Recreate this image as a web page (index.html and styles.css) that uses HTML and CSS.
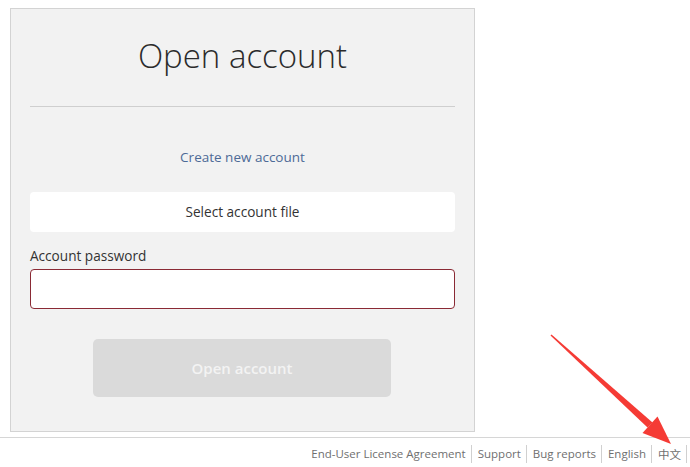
FILE: index.html
```html
<!DOCTYPE html>
<html lang="en">
<head>
<meta charset="utf-8">
<title>Open account</title>
<link rel="stylesheet" href="styles.css">
</head>
<body>
<div class="page">
  <div class="card">
    <h1 class="title">Open account</h1>
    <div class="divider"></div>
    <a class="create-link" href="#">Create new account</a>
    <div class="select-btn">Select account file</div>
    <label class="field-label">Account password</label>
    <div class="password-input"></div>
    <div class="submit-row">
      <div class="submit-btn">Open account</div>
    </div>
  </div>
</div>
<div class="footer">
  <span class="footer-item">End-User License Agreement</span>
  <span class="footer-item">Support</span>
  <span class="footer-item">Bug reports</span>
  <span class="footer-item">English</span>
  <span class="footer-item cjk">中文</span>
</div>
<svg class="arrow" width="690" height="467" viewBox="0 0 690 467">
  <polygon fill="#f53b35" points="551.5,334.5 652.5,422.5 647.5,427.5 550.5,335.5"/>
  <polygon fill="#f53b35" points="642.5,433 657.5,416.5 671,444"/>
</svg>
</body>
</html>
```
FILE: styles.css
```css
html, body {
  margin: 0;
  padding: 0;
  background: #ffffff;
  font-family: "Open Sans", "Noto Sans", sans-serif;
}

.page {
  padding: 8px 0 0 10px;
}

.card {
  width: 425px;
  padding: 27px 19px 34px;
  background: #f2f2f2;
  border: 1px solid #d3d3d3;
  display: flex;
  flex-direction: column;
}

.title {
  margin: 0;
  font-size: 33px;
  line-height: 40px;
  font-weight: 300;
  color: #2b2b2b;
  text-align: center;
}

.divider {
  margin-top: 30px;
  height: 1px;
  background: #cfcfcf;
}

.create-link {
  margin-top: 40px;
  font-size: 13.5px;
  line-height: 20px;
  color: #4d6a97;
  text-decoration: none;
  text-align: center;
}

.select-btn {
  margin-top: 25px;
  height: 40px;
  line-height: 40px;
  background: #ffffff;
  border-radius: 4px;
  text-align: center;
  font-size: 13.6px;
  color: #333333;
}

.field-label {
  margin-top: 14px;
  font-size: 13.6px;
  line-height: 20px;
  color: #333333;
}

.password-input {
  margin-top: 3px;
  height: 38px;
  background: #ffffff;
  border: 1px solid #8a2a35;
  border-radius: 4px;
}

.submit-row {
  margin-top: 30px;
  display: flex;
  padding-left: 63px;
}

.submit-btn {
  width: 298px;
  height: 58px;
  line-height: 58px;
  background: #dadada;
  border-radius: 5px;
  text-align: center;
  font-size: 15px;
  font-weight: 600;
  color: #f3f3f3;
}

.footer {
  margin-top: 5px;
  border-top: 1px solid #d6d6d6;
  padding: 7px 3px 0 0;
  display: flex;
  justify-content: flex-end;
  font-size: 11.5px;
  line-height: 18px;
  color: #6f6f6f;
}

.footer-item {
  padding: 0 5px 0 6px;
  border-right: 1px solid #d0d0d0;
}

.cjk {
  font-family: "Noto Sans CJK SC", sans-serif;
}

.arrow {
  position: absolute;
  left: 0;
  top: 0;
  pointer-events: none;
}
```
